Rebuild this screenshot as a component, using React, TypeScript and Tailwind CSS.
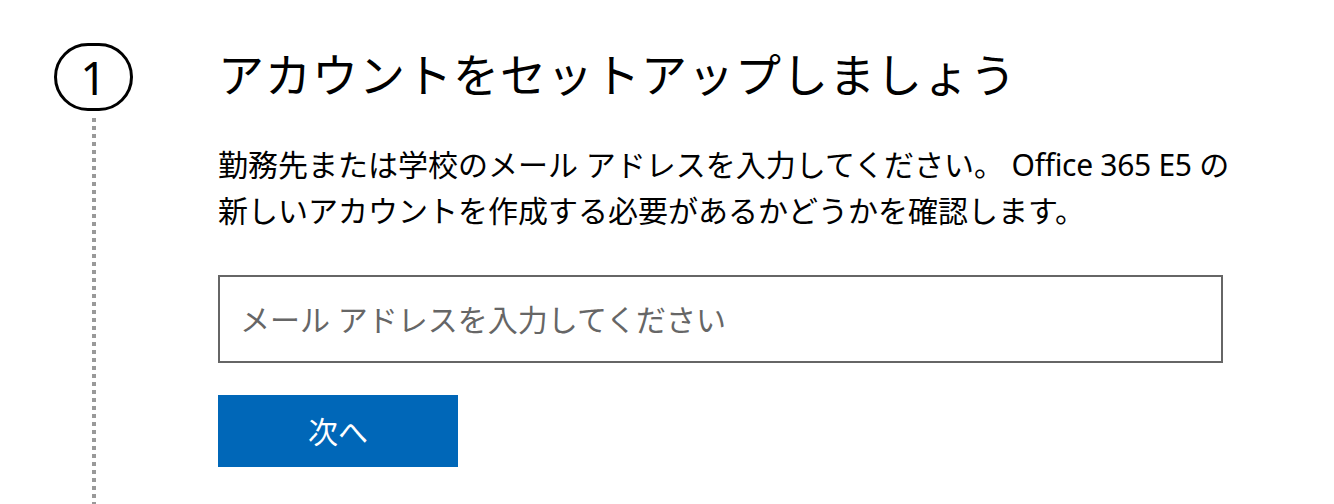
export default function App() {
  const font = {
    fontFamily: '"Noto Sans", "Noto Sans CJK JP", sans-serif',
  };
  return (
    <main
      className="flex h-[504px] overflow-hidden bg-white pl-[54px] pt-[43px] text-black"
      style={font}
    >
      {/* step marker */}
      <div className="flex w-[79px] flex-col items-center">
        <div className="flex h-[68px] w-[79px] items-center justify-center rounded-full border-[3px] border-black text-[46px] leading-none">
          1
        </div>
        <div className="mt-[7px] w-[4px] flex-1 bg-[repeating-linear-gradient(to_bottom,#999_0_4px,transparent_4px_8px)]" />
      </div>

      {/* step content */}
      <section className="ml-[85px] w-[1005px]">
        <h1 className="mt-[3px] text-[46px] font-normal leading-[56px] tracking-[1px]">
          アカウントをセットアップしましょう
        </h1>
        <p className="mt-[40px] whitespace-nowrap text-[30px] leading-[46px]">
          勤務先または学校のメール アドレスを入力してください。
          <span className="tracking-[-0.3px]"> Office 365 E5 </span>の
          <br />
          新しいアカウントを作成する必要があるかどうかを確認します。
        </p>
        <input
          type="email"
          placeholder="メール アドレスを入力してください"
          className="mt-[41px] block h-[88px] w-[1005px] border-2 border-[#666] px-[20px] text-[30px] outline-none placeholder:text-[#666]"
        />
        <button className="mt-[32px] flex h-[72px] w-[240px] items-center justify-center bg-[#0067b8] text-[30px] text-white">
          次へ
        </button>
      </section>
    </main>
  );
}
